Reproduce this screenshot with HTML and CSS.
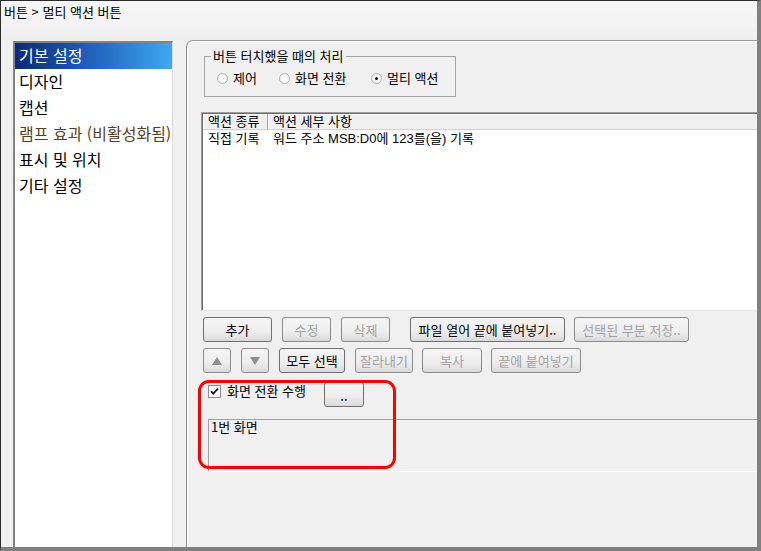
FILE: index.html
```html
<!DOCTYPE html>
<html lang="ko">
<head>
    <meta charset="UTF-8">
    <title>버튼 &gt; 멀티 액션 버튼</title>
    <link rel="stylesheet" href="styles.css">
</head>
<body>
<div class="window">
    <div class="titlebar">버튼 &gt; 멀티 액션 버튼</div>

    <div class="main">
        <!-- Left: settings category list -->
        <ul class="nav">
            <li class="nav-item selected">기본 설정</li>
            <li class="nav-item">디자인</li>
            <li class="nav-item">캡션</li>
            <li class="nav-item inactive">램프 효과 (비활성화됨)</li>
            <li class="nav-item">표시 및 위치</li>
            <li class="nav-item">기타 설정</li>
        </ul>

        <!-- Right: basic settings page -->
        <div class="panel">
            <fieldset class="group">
                <legend>버튼 터치했을 때의 처리</legend>
                <div class="radio-row">
                    <label class="radio radio-first"><span class="radio-mark"></span>제어</label>
                    <label class="radio radio-second"><span class="radio-mark"></span>화면 전환</label>
                    <label class="radio"><span class="radio-mark checked"></span>멀티 액션</label>
                </div>
            </fieldset>

            <div class="action-list">
                <div class="list-header">
                    <div class="col-type head-cell">액션 종류</div>
                    <div class="col-detail head-cell">액션 세부 사항</div>
                </div>
                <div class="list-row">
                    <div class="col-type">직접 기록</div>
                    <div class="col-detail">워드 주소 MSB:D0에 123를(을) 기록</div>
                </div>
            </div>

            <div class="btn-row">
                <div class="btn w-add">추가</div>
                <div class="btn disabled w-edit">수정</div>
                <div class="btn disabled w-del">삭제</div>
                <div class="btn w-paste-file">파일 열어 끝에 붙여넣기..</div>
                <div class="btn disabled w-save">선택된 부분 저장..</div>
            </div>

            <div class="btn-row">
                <div class="btn disabled w-arrow">
                    <svg width="10" height="8" viewBox="0 0 10 8"><polygon points="5,0 10,8 0,8" fill="#8f8f8f"/></svg>
                </div>
                <div class="btn disabled w-arrow">
                    <svg width="10" height="8" viewBox="0 0 10 8"><polygon points="0,0 10,0 5,8" fill="#8f8f8f"/></svg>
                </div>
                <div class="btn w-select">모두 선택</div>
                <div class="btn disabled w-cut">잘라내기</div>
                <div class="btn disabled w-copy">복사</div>
                <div class="btn disabled w-paste">끝에 붙여넣기</div>
            </div>

            <div class="screen-row">
                <label class="check">
                    <svg class="check-box" width="13" height="13" viewBox="0 0 13 13">
                        <rect x="0.5" y="0.5" width="12" height="12" fill="#fff" stroke="#8e8f8f"/>
                        <path d="M3 6.2 L5.2 8.6 L10 3.6" fill="none" stroke="#1a1a1a" stroke-width="1.8"/>
                    </svg>
                    화면 전환 수행
                </label>
                <div class="btn w-dots">..</div>
            </div>

            <div class="screen-box">1번 화면</div>

            <!-- red callout around the screen change option -->
            <div class="highlight"></div>
        </div>
    </div>
</div>
</body>
</html>
```

FILE: styles.css
```css
/* Dialog page: basic settings of a multi action button */
body {
    margin: 0;
    background-color: #f0f0f0;
    font-family: "Noto Sans CJK KR", "Liberation Sans", sans-serif;
    font-size: 13px;
    color: #000;
}
.window {
    width: 761px;
    height: 551px;
    box-sizing: border-box;
    border-top: 1px solid #2b2b2b;
    border-left: 1px solid #2b2b2b;
    border-right: 4px solid #808080;
    border-bottom: 4px solid #808080;
    display: flex;
    flex-direction: column;
    background-color: #f0f0f0;
    overflow: hidden;
}
.titlebar {
    height: 39px;
    box-sizing: border-box;
    padding: 3px 0 0 3px;
    line-height: 16px;
    background: linear-gradient(#f6f6f6, #f3f3f3 60%, #efefef);
}
.main {
    flex: 1;
    display: flex;
    min-height: 0;
}

/* left category list */
.nav {
    list-style: none;
    margin: 1px 0 0 12px;
    padding: 0;
    width: 160px;
    box-sizing: border-box;
    background-color: #fff;
    border-top: 2px solid #828282;
    border-left: 2px solid #828282;
    border-right: 1px solid #dadada;
    font-size: 16px;
}
.nav-item {
    height: 26px;
    line-height: 25px;
    padding-left: 4px;
    white-space: nowrap;
}
.nav-item.selected {
    color: #fff;
    background: linear-gradient(to right, #0b2a74, #1f5db8 45%, #3ea8f2);
}
.nav-item.inactive {
    color: #5a4020;
}

/* right settings page */
.panel {
    position: relative;
    flex: 1;
    margin-left: 13px;
    border-top: 1px solid #9a9a9a;
    border-left: 1px solid #8a8a8a;
    border-top-left-radius: 7px;
    box-shadow: inset 1px 1px #fff;
    display: flex;
    flex-direction: column;
    overflow: hidden;
}
.group {
    margin: 8px 0 0 17px;
    padding: 8px 6px 11px 6px;
    width: 252px;
    box-sizing: border-box;
    border: 1px solid #a5a5a5;
    min-width: 0;
}
.group legend {
    padding: 0 2px;
    line-height: 14px;
}
.radio-row {
    display: flex;
    align-items: center;
    height: 14px;
    padding-left: 6px;
}
.radio {
    display: flex;
    align-items: center;
    gap: 5px;
    line-height: 14px;
    white-space: nowrap;
}
.radio-first {
    width: 62px;
}
.radio-second {
    width: 92px;
}
.radio-mark {
    width: 11px;
    height: 11px;
    box-sizing: border-box;
    border: 1px solid #b2b2b2;
    border-radius: 50%;
    background: radial-gradient(circle at 60% 60%, #fff 30%, #e6e6e6);
    position: relative;
}
.radio-mark.checked::after {
    content: "";
    position: absolute;
    left: 3px;
    top: 3px;
    width: 3px;
    height: 3px;
    border-radius: 50%;
    background-color: #111;
}

/* action list */
.action-list {
    margin: 15px 0 0 14px;
    height: 199px;
    box-sizing: border-box;
    background-color: #fff;
    border-top: 1px solid #a0a0a0;
    border-left: 1px solid #a0a0a0;
    border-bottom: 1px solid #e3e3e3;
    box-shadow: inset 1px 1px #6a6a6a;
    padding: 1px 0 0 1px;
    font-family: "Liberation Sans", "Noto Sans CJK KR", sans-serif;
}
.list-header {
    display: flex;
    height: 16px;
    background-color: #f0f0f0;
}
.head-cell {
    box-sizing: border-box;
    height: 16px;
    line-height: 15px;
    border-right: 1px solid #a0a0a0;
    border-bottom: 1px solid #d0d0d0;
    box-shadow: inset 1px 1px #fff;
}
.list-header .col-detail {
    flex: 1;
    border-right: none;
}
.list-row {
    display: flex;
    height: 16px;
    padding-top: 1px;
    line-height: 15px;
}
.col-type {
    width: 65px;
    padding-left: 5px;
    box-sizing: border-box;
    white-space: nowrap;
}
.col-detail {
    padding-left: 5px;
    white-space: nowrap;
}

/* buttons */
.btn-row {
    display: flex;
    margin: 6px 0 0 16px;
    gap: 9px;
}
.btn {
    height: 25px;
    box-sizing: border-box;
    border: 1px solid #707070;
    border-radius: 3px;
    background: linear-gradient(#f5f5f5, #eeeeee 55%, #e2e2e2 85%, #d8d8d8);
    display: flex;
    align-items: center;
    justify-content: center;
    font-size: 13px;
    white-space: nowrap;
}
.btn.disabled {
    color: #a2a2a2;
    border-color: #8d8d8d;
}
.w-add { width: 69px; }
.w-edit { width: 49px; margin-left: 1px; }
.w-del { width: 49px; margin-left: 1px; }
.w-paste-file { width: 155px; margin-left: 11px; }
.w-save { width: 115px; }
.w-arrow { width: 28px; margin-right: 1px; }
.w-select { width: 66px; }
.w-cut { width: 58px; margin-left: 1px; }
.w-copy { width: 60px; }
.w-paste { width: 90px; }
.w-dots {
    width: 40px;
    align-items: flex-end;
    padding-bottom: 5px;
    line-height: 10px;
}

/* screen change option */
.screen-row {
    display: flex;
    margin: 9px 0 0 21px;
    height: 25px;
}
.check {
    display: flex;
    align-items: center;
    gap: 6px;
    height: 16px;
    line-height: 16px;
    margin-top: 1px;
    width: 116px;
}
.screen-box {
    margin: 12px 0 0 21px;
    height: 53px;
    box-sizing: border-box;
    border-top: 1px solid #a0a0a0;
    border-left: 1px solid #a0a0a0;
    border-bottom: 1px solid #fff;
    padding-left: 2px;
    line-height: 13px;
}
.highlight {
    position: absolute;
    left: 11px;
    top: 339px;
    width: 198px;
    height: 89px;
    box-sizing: border-box;
    border: 3px solid #ff0000;
    border-radius: 11px;
}
```
